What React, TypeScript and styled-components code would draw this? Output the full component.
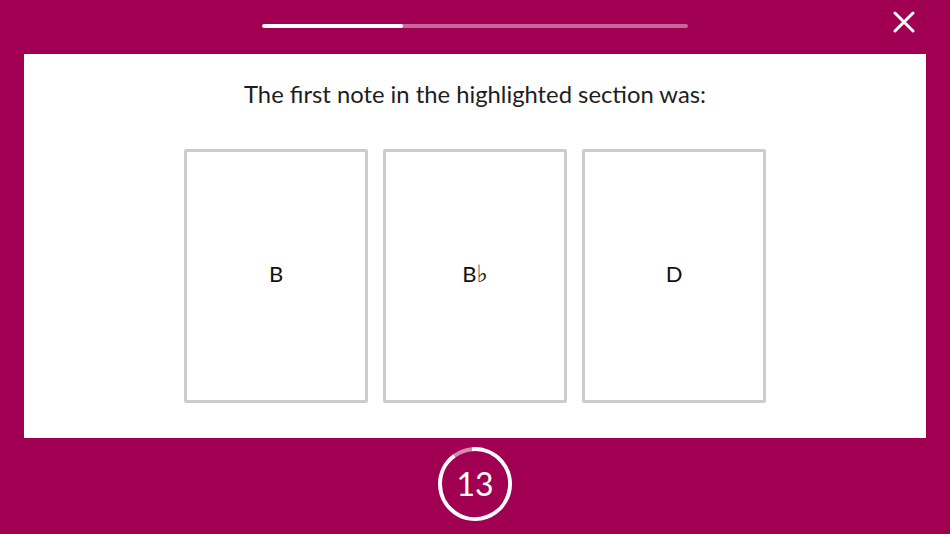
import React from 'react';
import styled, { createGlobalStyle } from 'styled-components';

const GlobalStyle = createGlobalStyle`
  html, body {
    margin: 0;
    padding: 0;
    background: #a10052;
  }
  body {
    font-family: Lato, 'Noto Sans', Arial, sans-serif;
  }
`;

const Screen = styled.div`
  width: 950px;
  height: 534px;
  display: flex;
  flex-direction: column;
  background: #a10052;
  overflow: hidden;
`;

const TopBar = styled.div`
  position: relative;
  height: 54px;
  display: flex;
  justify-content: center;
  align-items: flex-start;
`;

const Track = styled.div`
  margin-top: 24px;
  width: 426px;
  height: 4px;
  border-radius: 2px;
  background: #c8679a;
  overflow: hidden;
`;

const Fill = styled.div`
  height: 100%;
  background: #ffffff;
  border-radius: 2px;
`;

const CloseButton = styled.button`
  position: absolute;
  right: 35px;
  top: 11px;
  width: 22px;
  height: 22px;
  padding: 0;
  border: none;
  background: transparent;
  cursor: pointer;
`;

const Panel = styled.div`
  margin: 0 24px;
  height: 384px;
  background: #ffffff;
  display: flex;
  flex-direction: column;
  align-items: center;
`;

const Question = styled.h1`
  margin: 25px 0 39px;
  font-size: 23.8px;
  line-height: 31px;
  font-weight: 400;
  color: #1e1e1e;
`;

const Options = styled.div`
  display: flex;
  gap: 15px;
`;

const Option = styled.button`
  width: 184px;
  height: 254px;
  box-sizing: border-box;
  border: 3px solid #cccccc;
  border-radius: 2px;
  background: #ffffff;
  display: flex;
  align-items: center;
  justify-content: center;
  padding: 0 0 5px;
  font-family: Lato, 'Noto Sans', Arial, sans-serif;
  font-size: 22px;
  color: #111111;
  cursor: pointer;
`;

const Flat = styled.span`
  font-family: 'DejaVu Sans', sans-serif;
  font-size: 24px;
`;

const Footer = styled.div`
  flex: 1;
  display: flex;
  justify-content: center;
  align-items: center;
  padding-bottom: 5px;
`;

const Timer = styled.div`
  position: relative;
  width: 76px;
  height: 76px;
  display: flex;
  align-items: center;
  justify-content: center;
  color: #ffffff;
  font-size: 32px;
  font-weight: 400;
`;

const Ring = styled.svg`
  position: absolute;
  inset: 0;
`;

const progress = 0.33;
const secondsLeft = 13;
const elapsed = 0.085;

const arc = (r: number, from: number, to: number) => {
  const p = (a: number) => {
    const rad = ((a - 90) * Math.PI) / 180;
    return `${38 + r * Math.cos(rad)} ${38 + r * Math.sin(rad)}`;
  };
  const large = to - from > 180 ? 1 : 0;
  return `M ${p(from)} A ${r} ${r} 0 ${large} 1 ${p(to)}`;
};

const App: React.FC = () => {
  const gapStart = -elapsed * 360 - 5;
  return (
    <Screen>
      <GlobalStyle />
      <TopBar>
        <Track>
          <Fill style={{ width: `${progress * 100}%` }} />
        </Track>
        <CloseButton aria-label="Close">
          <svg width="22" height="22" viewBox="0 0 22 22">
            <path d="M2 2 L20 20 M20 2 L2 20" stroke="#ffffff" strokeWidth="3" strokeLinecap="round" />
          </svg>
        </CloseButton>
      </TopBar>
      <Panel>
        <Question>The first note in the highlighted section was:</Question>
        <Options>
          <Option>B</Option>
          <Option>
            B<Flat>♭</Flat>
          </Option>
          <Option>D</Option>
        </Options>
      </Panel>
      <Footer>
        <Timer>
          <Ring width="76" height="76" viewBox="0 0 76 76">
            <path d={arc(35, -5, gapStart + 360)} fill="none" stroke="#ffffff" strokeWidth="4" />
            <path d={arc(35, gapStart, -5)} fill="none" stroke="#d88bb1" strokeWidth="4" />
          </Ring>
          {secondsLeft}
        </Timer>
      </Footer>
    </Screen>
  );
};

export default App;
